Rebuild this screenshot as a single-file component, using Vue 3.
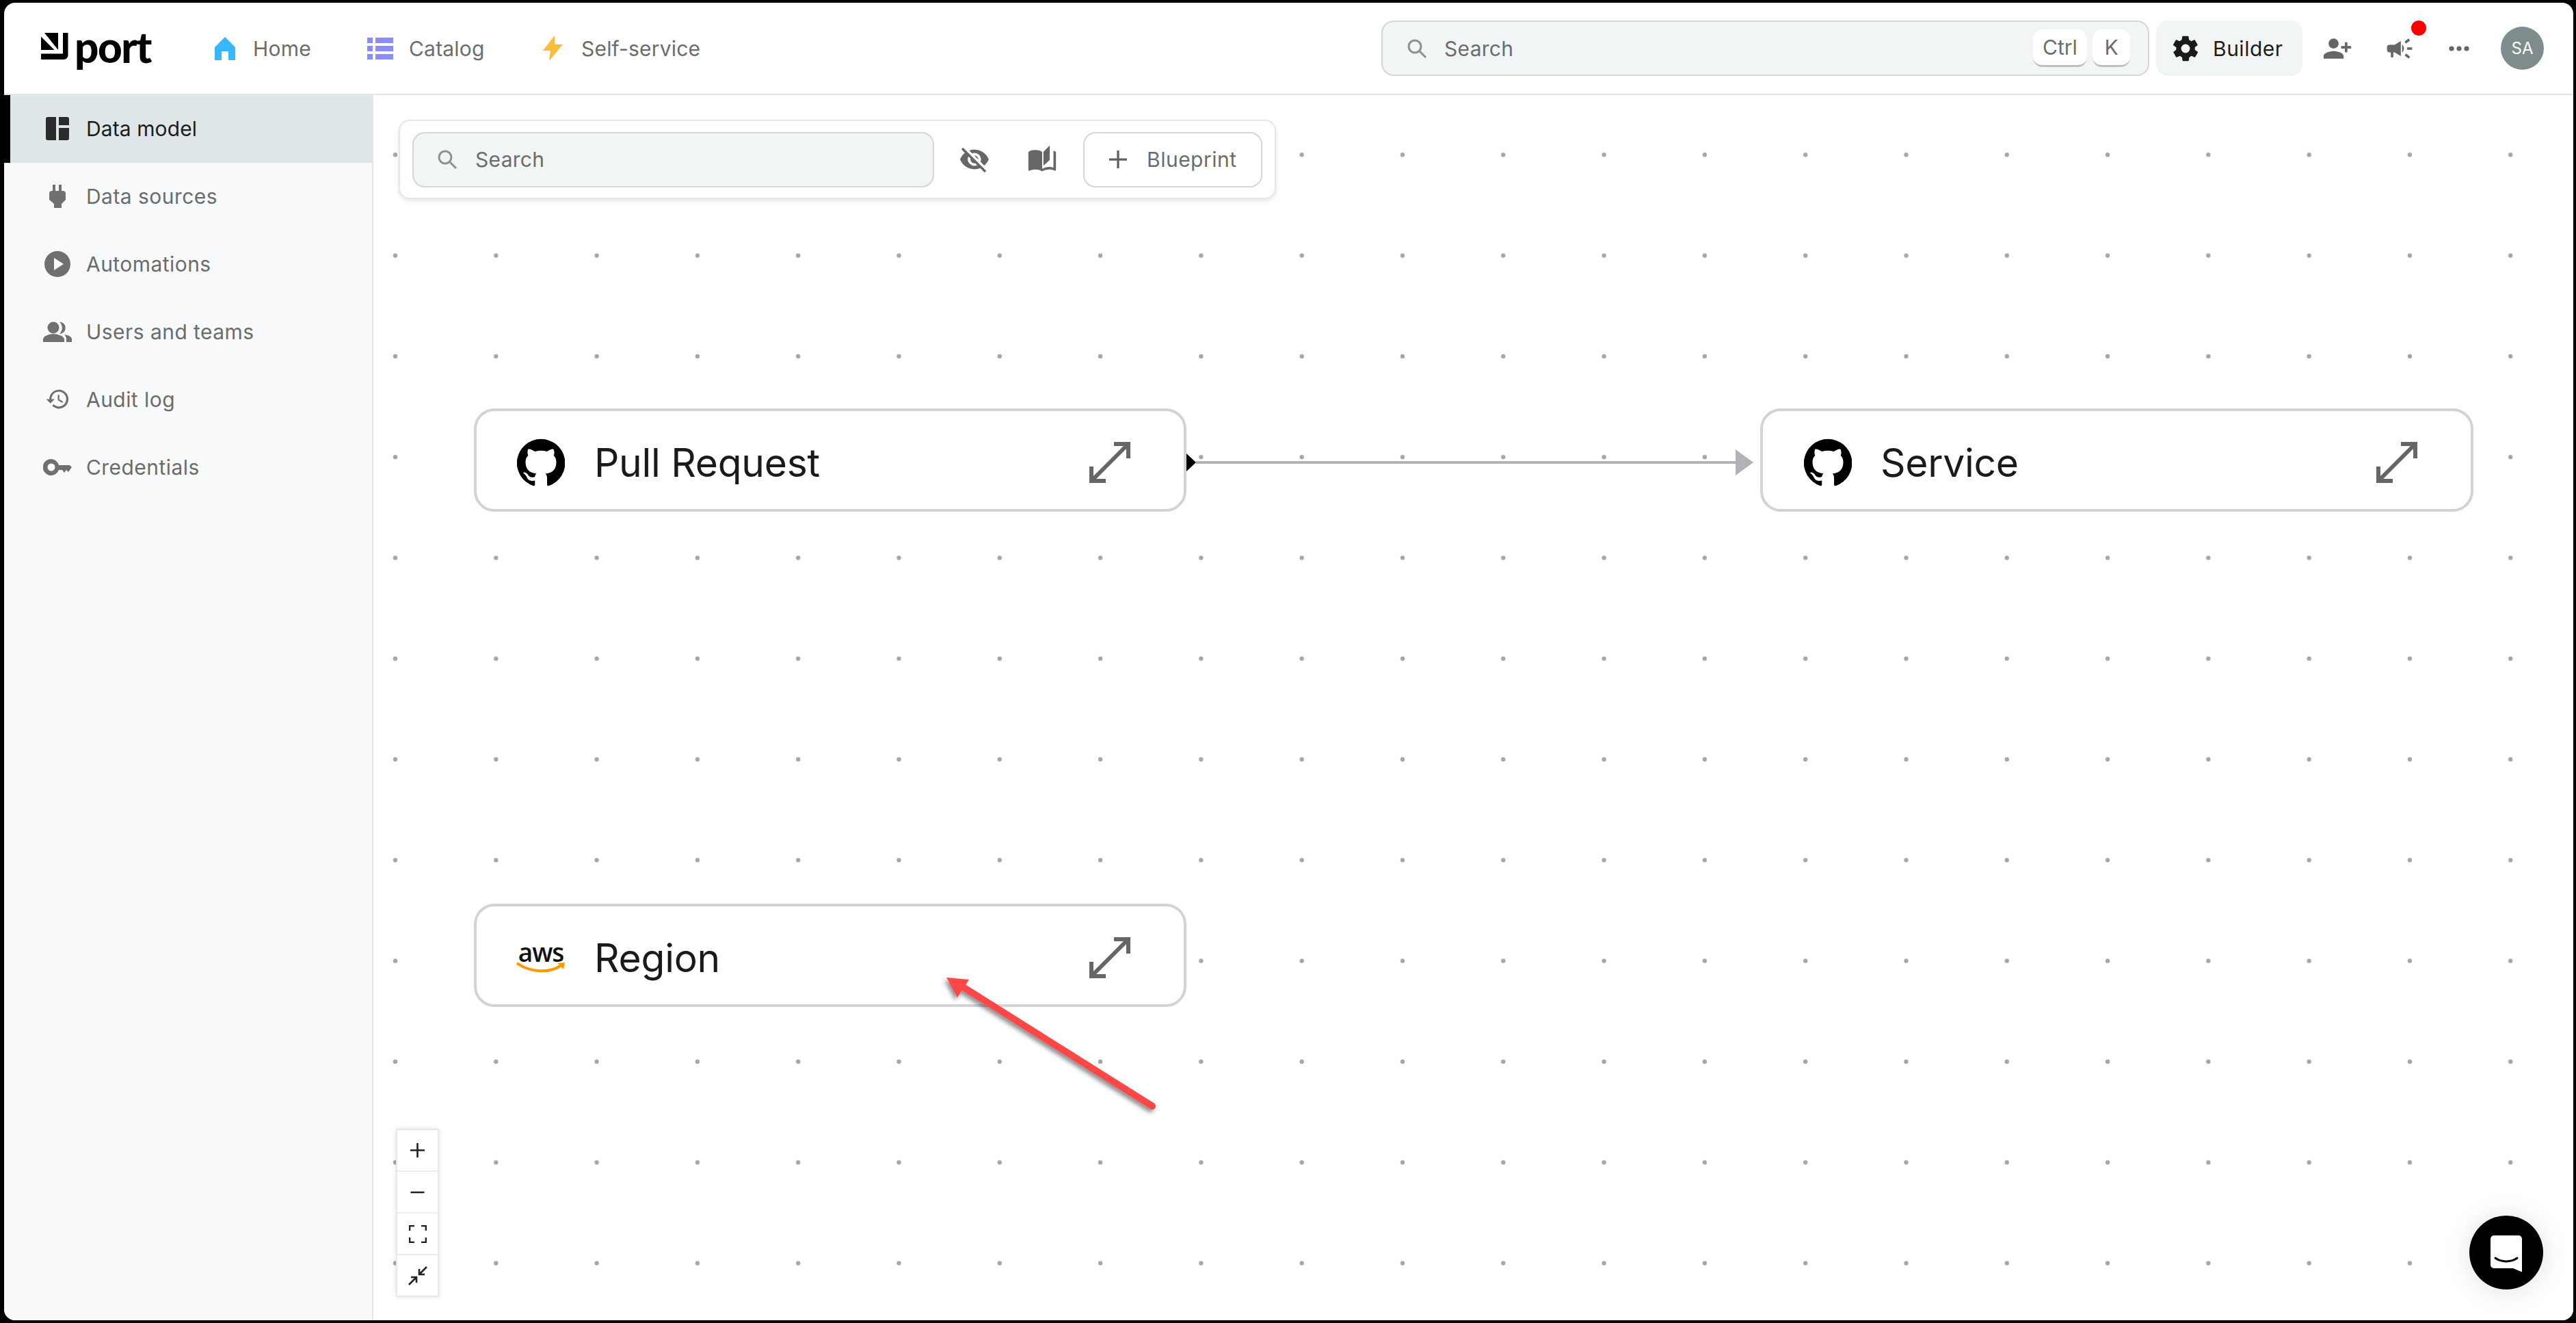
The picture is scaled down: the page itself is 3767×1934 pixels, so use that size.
<script setup>
const navItems = [
  { label: 'Data sources', icon: 'plug' },
  { label: 'Automations', icon: 'play' },
  { label: 'Users and teams', icon: 'users' },
  { label: 'Audit log', icon: 'history' },
  { label: 'Credentials', icon: 'key' },
]
const ghPath = 'M12 .3a12 12 0 0 0-3.8 23.4c.6.1.8-.3.8-.6v-2c-3.3.7-4-1.6-4-1.6-.6-1.4-1.4-1.8-1.4-1.8-1-.7.1-.7.1-.7 1.2.1 1.8 1.2 1.8 1.2 1 1.8 2.8 1.3 3.5 1 .1-.8.4-1.3.8-1.6-2.7-.3-5.5-1.3-5.5-6 0-1.2.5-2.3 1.3-3.1-.2-.4-.6-1.6 0-3.2 0 0 1-.3 3.4 1.2a11.5 11.5 0 0 1 6 0c2.3-1.5 3.3-1.2 3.3-1.2.7 1.6.3 2.8.1 3.2.8.8 1.3 1.9 1.3 3.2 0 4.6-2.8 5.6-5.5 5.9.5.4.9 1.1.9 2.2v3.3c0 .3.2.7.8.6A12 12 0 0 0 12 .3'
</script>

<template>
  <div class="window">
    <header class="topbar">
      <div class="logo">
        <svg class="logo-mark" viewBox="0 0 40 39">
          <path d="M5 0H25V25z" fill="#000" />
          <path d="M0 5.500L19.500 25H0z" fill="#000" />
          <path d="M32 0h7.500v33a6 6 0 0 1-6 6H0v-8.500h32z" fill="#000" />
        </svg>
        <span class="logo-text">port</span>
      </div>
      <nav class="topnav">
        <a class="topnav-item home">
          <svg viewBox="0 0 30 34" width="30" height="34"><path d="M15 0l15 15v19H20V21H10v13H0V15z" fill="#38b6ff" /></svg>
          <span>Home</span>
        </a>
        <a class="topnav-item catalog">
          <svg viewBox="0 0 38 32" width="38" height="32" fill="#8b8dff"><path d="M0 0h8v8H0zM12 0h26v8H12zM0 12h8v8H0zM12 12h26v8H12zM0 24h8v8H0zM12 24h26v8H12z" /></svg>
          <span>Catalog</span>
        </a>
        <a class="topnav-item self">
          <svg viewBox="0 0 29 37" width="29" height="37"><path d="M17 0L0 22h11l-2 15 20-24H17z" fill="#f9bd38" /></svg>
          <span>Self-service</span>
        </a>
      </nav>
      <div class="top-search">
        <svg class="search-icon" viewBox="0 0 32 32"><circle cx="13" cy="13" r="9" fill="none" stroke="#8e9192" stroke-width="3" /><path d="M20 20l9 9" stroke="#8e9192" stroke-width="3" /></svg>
        <span class="search-label">Search</span>
        <span class="key key-ctrl">Ctrl</span>
        <span class="key key-k">K</span>
      </div>
      <button class="builder">
        <svg viewBox="0 0 24 24" width="44" height="44"><path fill="#1a1a1a" d="M19.4 13c.1-.3.1-.7.1-1s0-.7-.1-1l2.1-1.6c.2-.2.2-.4.1-.6l-2-3.5c-.1-.2-.4-.3-.6-.2l-2.5 1c-.5-.4-1.100-.7-1.700-1l-.4-2.600c0-.2-.2-.4-.5-.4h-4c-.2 0-.4.2-.5.4l-.4 2.600c-.6.3-1.200.6-1.700 1l-2.500-1c-.2-.1-.5 0-.6.2l-2 3.500c-.1.2-.1.4.1.6L4.600 11c0 .3-.1.700-.1 1s0 .7.100 1l-2.100 1.600c-.2.200-.2.400-.1.600l2 3.500c.1.200.4.300.6.200l2.500-1c.5.400 1.100.700 1.700 1l.4 2.600c0 .2.200.4.500.4h4c.2 0 .4-.2.500-.4l.4-2.600c.6-.3 1.200-.6 1.700-1l2.500 1c.2.100.5 0 .6-.2l2-3.500c.1-.2.1-.4-.1-.6zM12 15.500a3.500 3.500 0 1 1 0-7 3.500 3.500 0 0 1 0 7z" /></svg>
        <span>Builder</span>
      </button>
      <div class="top-actions">
        <svg class="act-add" viewBox="0 0 24 24" width="44" height="44"><path fill="#666" d="M15 12a4 4 0 1 0 0-8 4 4 0 0 0 0 8zm-9-2V7H4v3H1v2h3v3h2v-3h3v-2zm9 4c-2.700 0-8 1.300-8 4v2h16v-2c0-2.700-5.300-4-8-4z" transform="matrix(-1 0 0 1 24 0)" /></svg>
        <svg class="act-mega" viewBox="0 0 24 24" width="44" height="44"><path fill="#666" d="M18 11v2h4v-2zm-2 6.600c1 .7 2.200 1.700 3.200 2.400l1.200-1.600c-1-.7-2.200-1.700-3.200-2.400zM20.400 5.600L19.200 4c-1 .7-2.200 1.700-3.200 2.400l1.200 1.600c1-.7 2.200-1.700 3.200-2.400zM4 9a2 2 0 0 0-2 2v2a2 2 0 0 0 2 2h1v4h2v-4h1l5 3V6L8 9zm11.500 3c0-1.300-.6-2.500-1.500-3.300v6.600c.9-.8 1.500-2 1.500-3.300z" /></svg>
        <span class="red-dot"></span>
        <svg class="act-more" viewBox="0 0 30 8" width="30" height="8" fill="#666"><circle cx="4" cy="4" r="3.600" /><circle cx="15" cy="4" r="3.600" /><circle cx="26" cy="4" r="3.600" /></svg>
        <span class="avatar">SA</span>
      </div>
    </header>

    <div class="body">
      <aside class="sidebar">
        <a class="side-item active">
          <span class="side-icon">
            <svg viewBox="0 0 34 34" width="34" height="34" fill="#2b2b2b"><path d="M3 0h12v34H3a3 3 0 0 1-3-3V3a3 3 0 0 1 3-3zM19 0h12a3 3 0 0 1 3 3v9H19zM19 16h15v15a3 3 0 0 1-3 3H19z" /></svg>
          </span>
          <span>Data model</span>
        </a>
        <a v-for="item in navItems" :key="item.label" class="side-item">
          <span class="side-icon">
            <svg v-if="item.icon === 'plug'" viewBox="0 0 24 34" width="24" height="34" fill="#6f7072"><path d="M5 0h4v9h5V0h4v9h2a4 4 0 0 1 4 4v9l-6 6v6H7v-6l-7-6v-9a4 4 0 0 1 4-4h1z" /></svg>
            <svg v-else-if="item.icon === 'play'" viewBox="0 0 38 38" width="38" height="38"><circle cx="19" cy="19" r="19" fill="#6f7072" /><path d="M14 10l14 9-14 9z" fill="#fff" /></svg>
            <svg v-else-if="item.icon === 'users'" viewBox="0 0 42 30" width="42" height="30" fill="#6f7072"><circle cx="15" cy="9" r="8.500" /><path d="M0 30v-4c0-5 10-8 15-8s16 3 16 8v4z" /><path d="M24 .5A8.700 8.700 0 0 1 24 18 12 12 0 0 0 24 .5zM31 19c6 1 11 3 11 7v4h-8v-4c0-3-1-5-3-7z" /></svg>
            <svg v-else-if="item.icon === 'history'" viewBox="0 0 24 24" width="37" height="37"><path fill="#6f7072" d="M13 3a9 9 0 0 0-9 9H1l3.900 3.900.1.100L9 12H6a7 7 0 1 1 2.100 4.900l-1.400 1.400A9 9 0 1 0 13 3zm-1 5v5l4.300 2.500.7-1.200-3.500-2.100V8z" /></svg>
            <svg v-else viewBox="0 0 42 24" width="42" height="24"><path fill="#6f7072" d="M12 0a12 12 0 1 0 11 16h5l3 4 3-4 3 3 5-7-3-3H23A12 12 0 0 0 12 0zm0 6.500a5.500 5.500 0 1 1 0 11 5.500 5.500 0 0 1 0-11z" /></svg>
          </span>
          <span class="side-label">{{ item.label }}</span>
        </a>
      </aside>

      <main class="canvas">
        <div class="toolbar">
          <div class="tool-search">
            <svg class="search-icon" viewBox="0 0 32 32"><circle cx="13" cy="13" r="9" fill="none" stroke="#8e9192" stroke-width="3" /><path d="M20 20l9 9" stroke="#8e9192" stroke-width="3" /></svg>
            <span class="search-label">Search</span>
          </div>
          <svg class="tool-eye" viewBox="0 0 24 24" width="46" height="46"><path fill="#666" d="M12 7a5 5 0 0 1 5 5c0 .6-.1 1.300-.4 1.800l2.900 2.900c1.500-1.300 2.700-2.900 3.400-4.700C21.200 7.600 17 4.500 12 4.500c-1.400 0-2.700.2-4 .7l2.200 2.200c.5-.3 1.200-.4 1.800-.4zM2 4.300l2.300 2.300.4.400C3.100 8.300 1.800 10 1 12c1.700 4.400 6 7.500 11 7.500 1.600 0 3-.3 4.400-.8l.4.400 2.900 2.900 1.300-1.300L3.300 3zM7.500 9.800L9 11.400c0 .2-.1.400-.1.600a3 3 0 0 0 3 3c.2 0 .4 0 .6-.1l1.600 1.500a5 5 0 0 1-6.700-6.600zm4.300-.8l3.100 3.100V12a3 3 0 0 0-3-3z" /></svg>
          <svg class="tool-book" viewBox="0 0 24 24" width="44" height="44"><path fill="#666" d="M18 1l-5 5v11l5-4.500zM1 6v14.600c0 .3.200.5.500.5.100 0 .2 0 .3-.1C3.100 20.400 5 20 6.500 20c2 0 4 .4 5.500 1.500V6c-1.500-1.100-3.500-1.500-5.500-1.500S2.500 4.900 1 6zm22 13.500V6c-.6-.4-1.300-.7-2-1v13.500c-1.100-.3-2.300-.5-3.500-.5-1.700 0-4.100.7-5.500 1.500v2c1.400-.9 3.800-1.500 5.500-1.500s3.400.3 4.800 1c.1 0 .2.100.2.100.3 0 .5-.2.500-.5z" /></svg>
          <button class="blueprint">
            <svg viewBox="0 0 24 24" width="26" height="26"><path d="M12 0v24M0 12h24" stroke="#5e6061" stroke-width="3" fill="none" /></svg>
            <span>Blueprint</span>
          </button>
        </div>

        <div class="node node-pr">
          <svg class="gh" viewBox="0 0 24 24"><path :d="ghPath" /></svg>
          <span class="node-name">Pull Request</span>
          <svg class="expand" viewBox="0 0 60 60"><path d="M36 3h21v21M24 57H3V36M55 5L5 55" fill="none" stroke="#666" stroke-width="6" /></svg>
        </div>
        <div class="node node-svc">
          <svg class="gh" viewBox="0 0 24 24"><path :d="ghPath" /></svg>
          <span class="node-name">Service</span>
          <svg class="expand" viewBox="0 0 60 60"><path d="M36 3h21v21M24 57H3V36M55 5L5 55" fill="none" stroke="#666" stroke-width="6" /></svg>
        </div>
        <div class="node node-region">
          <span class="aws">
            <span class="aws-word">aws</span>
            <svg viewBox="0 0 72 16" width="72" height="16"><path d="M1 2c20 14 48 15 65 3" fill="none" stroke="#f90" stroke-width="4" /><path d="M60 2l11-1-2 10z" fill="#f90" /></svg>
          </span>
          <span class="node-name">Region</span>
          <svg class="expand" viewBox="0 0 60 60"><path d="M36 3h21v21M24 57H3V36M55 5L5 55" fill="none" stroke="#666" stroke-width="6" /></svg>
        </div>

        <svg class="edge" viewBox="0 0 830 40" width="830" height="40">
          <path d="M14 20H805" stroke="#b1b1b7" stroke-width="4" />
          <path d="M0 7l14 13L0 33z" fill="#000" />
          <path d="M803 1l26 19-26 19z" fill="#b1b1b7" />
        </svg>

        <svg class="callout" viewBox="0 0 330 215" width="330" height="215">
          <defs><filter id="arrow-shadow" x="-20%" y="-20%" width="140%" height="140%"><feDropShadow dx="-3" dy="4" stdDeviation="3" flood-color="#000" flood-opacity=".45" /></filter></defs>
          <g filter="url(#arrow-shadow)">
            <path d="M34 22L309 195" stroke="#ff4646" stroke-width="10" stroke-linecap="round" fill="none" />
            <path d="M8 7l33 3-17 26z" fill="#ff4646" />
          </g>
        </svg>

        <div class="zoom-panel">
          <button><svg viewBox="0 0 20 20" width="21" height="21"><path d="M10 0v20M0 10h20" stroke="#222" stroke-width="2.500" /></svg></button>
          <button><svg viewBox="0 0 20 4" width="21" height="4"><path d="M0 2h20" stroke="#222" stroke-width="2.500" /></svg></button>
          <button><svg viewBox="0 0 26 26" width="26" height="26"><path d="M1 8V1h7M18 1h7v7M25 18v7h-7M8 25H1v-7" fill="none" stroke="#222" stroke-width="2.600" /></svg></button>
          <button><svg viewBox="0 0 28 28" width="28" height="28"><path d="M27 1L16 12M16 4v8h8M1 27l11-11M4 16h8v8" fill="none" stroke="#222" stroke-width="2.600" /></svg></button>
        </div>

        <button class="chat">
          <svg viewBox="0 0 46 54" width="46" height="54"><path d="M5 0h36a5 5 0 0 1 5 5v48.500l-13-5.500H5a5 5 0 0 1-5-5V5a5 5 0 0 1 5-5z" fill="#fff" /><path d="M7 33c9 6.500 23 6.500 32 0" fill="none" stroke="#000" stroke-width="3" stroke-linecap="round" /></svg>
        </button>
      </main>
    </div>
  </div>
</template>

<style>
html, body { margin: 0; background: #000; }
</style>

<style scoped>
.window {
  box-sizing: border-box;
  width: 3757px;
  height: 1926px;
  margin: 4px 0 0 6px;
  background: #fff;
  border-radius: 16px;
  overflow: hidden;
  display: flex;
  flex-direction: column;
  font-family: "Inter", "Liberation Sans", sans-serif;
  position: relative;
}
.topbar {
  box-sizing: border-box;
  height: 135px;
  flex: none;
  display: flex;
  align-items: center;
  border-bottom: 2px solid #e4e5e6;
  padding-left: 54px;
  position: relative;
}
.logo { display: flex; align-items: center; width: 254px; flex: none; padding-bottom: 6px; box-sizing: border-box; }
.logo-mark { width: 40px; height: 39px; flex: none; }
.logo-text {
  font-family: "Lato", sans-serif;
  font-weight: 900;
  font-size: 62px;
  line-height: 1;
  margin-left: 9px;
  color: #000;
  letter-spacing: -1.500px;
}
.topnav { display: flex; align-items: center; flex: none; }
.topnav-item { display: flex; align-items: center; color: #6a6c6e; font-size: 30px; letter-spacing: .2px; }
.topnav-item svg { flex: none; }
.home { width: 223px; gap: 26px; }
.catalog { width: 257px; gap: 23px; }
.self { gap: 27px; width: 256px; }
.top-search {
  box-sizing: border-box;
  width: 1123px;
  height: 81px;
  margin-left: 970px;
  flex: none;
  display: flex;
  align-items: center;
  background: #f1f5f6;
  border: 2px solid #d5d6d6;
  border-radius: 18px;
  padding-left: 34px;
}
.search-icon { width: 32px; height: 32px; flex: none; }
.search-label { margin-left: 24px; font-size: 30px; color: #6a6c6e; flex: 1; letter-spacing: .3px; }
.tool-search .search-label { margin-left: 25px; }
.key {
  box-sizing: border-box;
  height: 55px;
  background: #fff;
  border-bottom: 3px solid #bdbebf;
  border-radius: 14px;
  display: flex;
  align-items: center;
  justify-content: center;
  font-size: 30px;
  color: #6a6c6e;
}
.key-ctrl { width: 79px; margin-right: 8px; }
.key-k { width: 55px; margin-right: 26px; }
.builder {
  box-sizing: border-box;
  width: 214px;
  height: 81px;
  margin-left: 10px;
  flex: none;
  border: 0;
  background: #f1f5f6;
  border-radius: 18px;
  display: flex;
  align-items: center;
  padding: 0 0 0 21px;
  gap: 18px;
  font: inherit;
  font-size: 30px;
  letter-spacing: .5px;
  color: #1c1c1c;
}
.top-actions { position: relative; display: flex; align-items: center; flex: none; margin-left: 29px; }
.act-mega { margin-left: 47px; }
.act-more { margin-left: 50px; }
.avatar {
  width: 63px;
  height: 63px;
  border-radius: 50%;
  background: #7f8c8d;
  color: #fff;
  font-size: 24px;
  display: flex;
  align-items: center;
  justify-content: center;
  margin-left: 46px;
}
.red-dot {
  position: absolute;
  left: 130px;
  top: -9px;
  width: 22px;
  height: 22px;
  border-radius: 50%;
  background: #f00;
}
.body { flex: 1; display: flex; min-height: 0; }
.sidebar {
  box-sizing: border-box;
  width: 540px;
  flex: none;
  background: #f7f9fb;
  border-right: 2px solid #e4e7ea;
}
.side-item {
  box-sizing: border-box;
  height: 99px;
  display: flex;
  align-items: center;
  color: #6a6c6e;
  font-size: 30px;
  letter-spacing: .45px;
  border-left: 9px solid transparent;
  padding-bottom: 2px;
}
.side-item.active { background: #dfe6e9; border-left-color: #000; color: #1c1c1c; letter-spacing: .1px; }
.side-icon { width: 112px; padding-left: 26px; margin-right: -1px; box-sizing: border-box; display: flex; justify-content: center; flex: none; }
.canvas {
  flex: 1;
  position: relative;
  background-color: #fff;
  background-image: radial-gradient(circle at center, #a6a6a6 0 3px, transparent 3.600px);
  background-size: 147.300px 147.300px;
  background-position: -41.650px 13.650px;
}
.toolbar {
  position: absolute;
  left: 37px;
  top: 36px;
  box-sizing: border-box;
  width: 1283px;
  height: 116px;
  background: #fff;
  border: 2px solid #e6e6e6;
  border-radius: 16px;
  box-shadow: 0 3px 6px rgba(0,0,0,.1);
  display: flex;
  align-items: center;
  padding-left: 18px;
}
.tool-search {
  box-sizing: border-box;
  width: 763px;
  height: 81px;
  flex: none;
  background: #f1f5f6;
  border: 2px solid #d5d6d6;
  border-radius: 18px;
  display: flex;
  align-items: center;
  padding-left: 33px;
}
.tool-eye { margin-left: 36px; flex: none; }
.tool-book { margin-left: 54px; flex: none; }
.blueprint {
  box-sizing: border-box;
  width: 262px;
  height: 81px;
  margin-left: 38px;
  flex: none;
  background: #fff;
  border: 2px solid #d5d6d6;
  border-radius: 18px;
  display: flex;
  align-items: center;
  padding: 0 0 0 36px;
  gap: 29px;
  font: inherit;
  font-size: 30px;
  letter-spacing: .5px;
  color: #6a6c6e;
}
.node {
  position: absolute;
  box-sizing: border-box;
  width: 1042px;
  height: 151px;
  background: #fff;
  border: 4px solid #d3d3d3;
  border-radius: 30px;
  display: flex;
  align-items: center;
  padding: 7px 78px 0 60px;
}
.node-pr { left: 147px; top: 458px; }
.node-svc { left: 2028px; top: 458px; width: 1043px; }
.node-region { left: 147px; top: 1182px; }
.gh { width: 70px; height: 70px; flex: none; margin-left: -1px; }
.node-svc .gh { margin-left: 0; }
.node-svc .node-name { margin-left: 42px; }
.aws { width: 70px; flex: none; display: flex; flex-direction: column; align-items: center; margin-left: -1px; }
.aws-word { font-family: "Open Sans", sans-serif; font-size: 37px; line-height: 28px; color: #111; font-weight: 600; letter-spacing: -1px; }
.node-name { margin-left: 43px; flex: 1; font-size: 57px; color: #1a1a1a; letter-spacing: -.3px; }
.expand { width: 60px; height: 60px; flex: none; }
.edge { position: absolute; left: 1189px; top: 517px; }
.callout { position: absolute; left: 830px; top: 1283px; pointer-events: none; }
.zoom-panel {
  position: absolute;
  left: 35px;
  top: 1513px;
  width: 59px;
  background: #eee;
  box-shadow: 0 0 0 2px #e8e8e8, 0 0 6px 2px rgba(0,0,0,.12);
  display: flex;
  flex-direction: column;
  gap: 2px;
}
.zoom-panel button {
  height: 59px;
  border: 0;
  padding: 0;
  background: #fff;
  display: flex;
  align-items: center;
  justify-content: center;
}
.chat {
  position: absolute;
  left: 3065px;
  top: 1638px;
  width: 108px;
  height: 108px;
  padding: 4px 0 0;
  border: 0;
  border-radius: 50%;
  background: #000;
  box-shadow: 0 2px 40px rgba(0,0,0,.12);
  display: flex;
  align-items: center;
  justify-content: center;
}
</style>
